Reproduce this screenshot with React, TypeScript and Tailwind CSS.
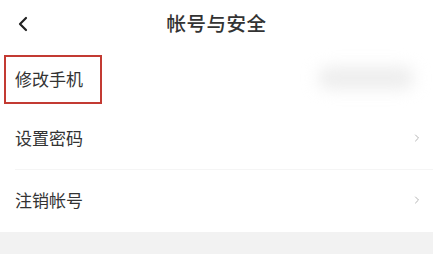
import { ChevronLeft, ChevronRight } from "lucide-react"

const rows = [
  { label: "设置密码", h: "h-[60px]" },
  { label: "注销帐号", h: "h-[62px]" },
]

export default function App() {
  return (
    <div className="w-[433px] h-[254px] bg-white flex flex-col overflow-hidden font-['Noto_Sans_CJK_SC',sans-serif] text-[#333]">
      {/* header */}
      <div className="relative h-[50px] flex items-center justify-center">
        <ChevronLeft className="absolute left-[11px] top-[12px] w-[24px] h-[24px] text-[#222]" strokeWidth={2.2} />
        <h1 className="text-[19.5px] font-medium leading-none tracking-[0.5px] -mt-[4px]">帐号与安全</h1>
      </div>

      {/* 修改手机 */}
      <div className="relative h-[59px] flex items-center">
        <div className="ml-[4px] w-[98px] h-[49px] border-2 border-[#c33a32] flex items-center pl-[9px] pb-[3px]">
          <span className="text-[17px] leading-none">修改手机</span>
        </div>
        <div className="absolute left-[318px] top-[17px] w-[96px] h-[22px] rounded-full bg-[#ededed] blur-[8px]" />
      </div>

      {rows.map((row, i) => (
        <div key={row.label} className="flex flex-col">
          <div className={`${row.h} flex items-center justify-between pl-[15px] pr-[10px] pb-[3px]`}>
            <span className="text-[17px] leading-none">{row.label}</span>
            <ChevronRight className="w-[12px] h-[12px] text-[#b5b5b5]" strokeWidth={2} />
          </div>
          {i === 0 && <div className="ml-[15px] h-px bg-[#f5f5f5]" />}
        </div>
      ))}

      <div className="flex-1 bg-[#f2f2f2]" />
    </div>
  )
}
